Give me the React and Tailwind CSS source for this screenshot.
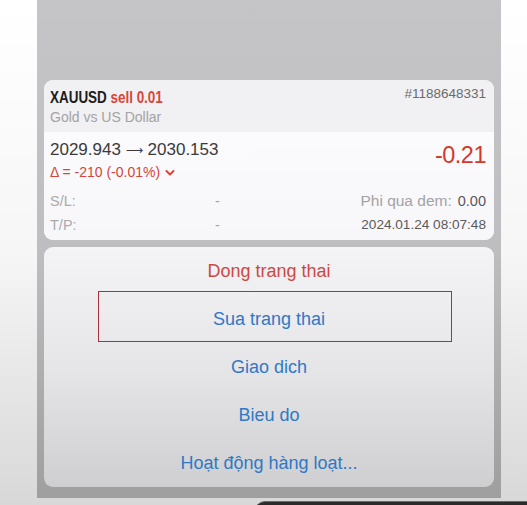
import React from "react";

const sans = { fontFamily: '"Liberation Sans", Arial, sans-serif' };

function Chevron() {
  return (
    <svg width="10" height="8" viewBox="0 0 10 8" className="ml-[5px] mt-[2px]">
      <polyline points="1.5,2 5,5.5 8.5,2" fill="none" stroke="#d6453b" strokeWidth="2" strokeLinecap="round" strokeLinejoin="round" />
    </svg>
  );
}

export default function App() {
  const items = [
    { t: "Dong trang thai", c: "text-[#cb4a41]" },
    { t: "Sua trang thai", c: "text-[#2f79c6]" },
    { t: "Giao dich", c: "text-[#2f79c6]" },
    { t: "Bieu do", c: "text-[#2f79c6]" },
    { t: "Hoạt động hàng loạt...", c: "text-[#2f79c6]" },
  ];
  return (
    <div
      className="relative w-[527px] h-[505px] overflow-hidden flex bg-gradient-to-b from-[#ffffff] via-[#f6f6f6] to-[#d8d8d8]"
      style={sans}
    >
      <div className="w-[37px] shrink-0" />
      <div className="w-[464px] h-[498px] shrink-0 flex flex-col px-[7px] pt-[80px] gap-[7px] bg-gradient-to-b from-[#c5c4c6] via-[#bebdbf] to-[#9f9f9f]">
        {/* Position card */}
        <div className="h-[160px] rounded-[9px] overflow-hidden flex flex-col bg-[#f9f8fa]">
          <div className="h-[52px] bg-[#f1f0f2] flex justify-between pl-[6px] pr-[8px]">
            <div className="pt-[8px]">
              <div className="h-[20px] leading-[20px] text-[16px] whitespace-nowrap">
                <span className="inline-block origin-left scale-x-[0.84] font-bold">
                  <span className="text-[#1c1c1c]">XAUUSD</span>
                  <span className="text-[#d8463a]"> sell 0.01</span>
                </span>
              </div>
              <div className="h-[18px] leading-[18px] text-[14px] text-[#a3a3a5]">Gold vs US Dollar</div>
            </div>
            <div className="pt-[5px] h-[18px] leading-[18px] text-[13.5px] text-[#6b6b6d]">#1188648331</div>
          </div>
          <div className="flex-1 pl-[6px] pr-[8px] bg-gradient-to-b from-[#fbfafc] to-[#f7f6f8]">
            <div className="flex justify-between">
              <div className="pt-[8px]">
                <div className="h-[20px] leading-[20px] text-[17px] text-[#3a3a3c] whitespace-nowrap">
                  2029.943{" "}
                  <span className="relative top-[-1px] text-[12px]" style={{ fontFamily: '"DejaVu Sans", sans-serif' }}>⟶</span>
                  {" "}2030.153
                </div>
                <div className="mt-[3px] h-[18px] leading-[18px] text-[14px] text-[#d6453b] flex items-center">
                  <span>Δ = -210 (-0.01%)</span>
                  <Chevron />
                </div>
              </div>
              <div className="pt-[9px] h-[28px] leading-[28px] text-[23.5px] tracking-[-0.5px] text-[#d3392b]">-0.21</div>
            </div>
            <div className="mt-[8px] h-[24px] leading-[24px] flex text-[14.5px]">
              <div className="w-[165px] text-[#ababad]">S/L:</div>
              <div className="text-[#a3a3a5]">-</div>
              <div className="flex-1 text-right">
                <span className="text-[15.5px] text-[#a3a3a5]">Phi qua dem:</span>
                <span className="ml-[6px] text-[#58585a]">0.00</span>
              </div>
            </div>
            <div className="h-[24px] leading-[24px] flex text-[14.5px]">
              <div className="w-[165px] text-[#ababad]">T/P:</div>
              <div className="text-[#a3a3a5]">-</div>
              <div className="flex-1 text-right text-[13.6px] text-[#5a5a5c]">2024.01.24 08:07:48</div>
            </div>
          </div>
        </div>
        {/* Action sheet */}
        <div className="relative h-[240px] rounded-[9px] overflow-hidden flex flex-col bg-gradient-to-b from-[#f4f3f5] via-[#e6e5e7] to-[#cfced0]">
          {items.map((it) => (
            <div key={it.t} className={"h-[48px] flex items-center justify-center text-[18px] " + it.c}>
              {it.t}
            </div>
          ))}
          <div className="absolute left-[54px] top-[44px] w-[354px] h-[51px] border border-[#a9323a]" />
        </div>
      </div>
      <div className="absolute left-[255px] top-[501px] w-[290px] h-[10px] rounded-tl-[10px] bg-[#2b2b2b] border-t border-[#6a6a6a]" />
    </div>
  );
}
